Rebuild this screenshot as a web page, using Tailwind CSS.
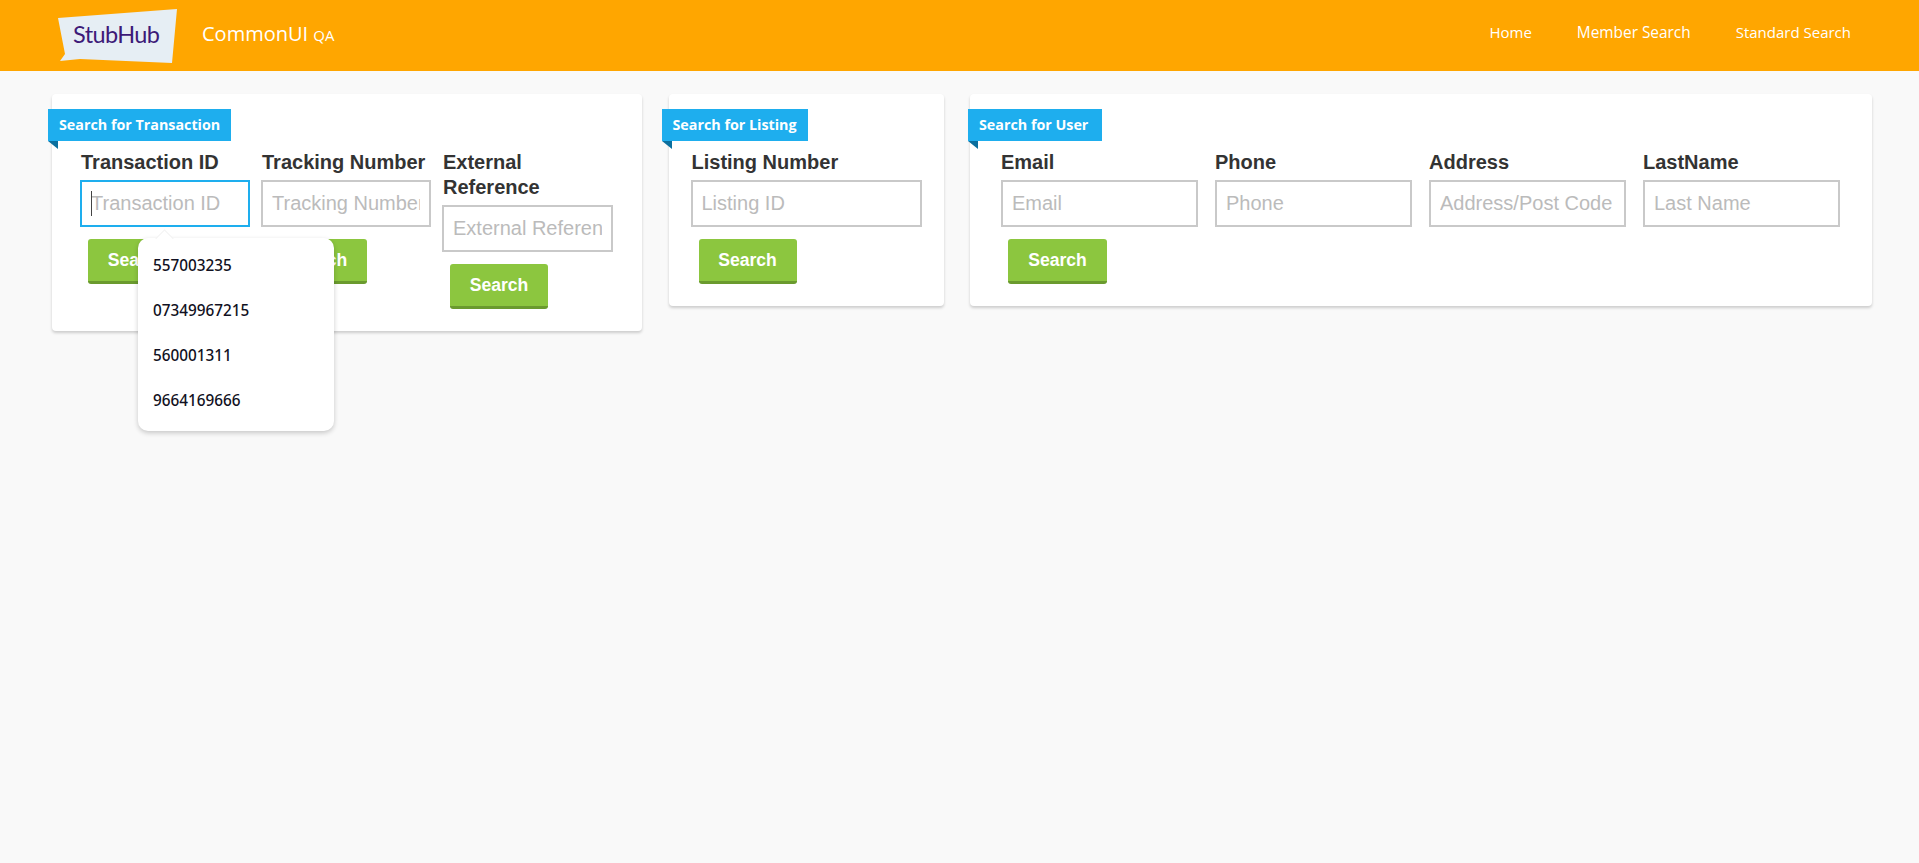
<!DOCTYPE html>
<html lang="en">
  <head>
    <meta charset="UTF-8" />
    <title>CommonUI QA</title>
    <script src="https://cdn.jsdelivr.net/npm/@tailwindcss/browser@4"></script>
  </head>
  <body class="bg-[#f9f9f9] min-h-[863px] font-['Liberation_Sans',sans-serif] text-[#333]">
    <!-- top bar -->
    <header class="h-[71px] bg-[#ffa600] flex items-start justify-between pl-[58px] pr-[68px] font-['Open_Sans',sans-serif] text-white">
      <div class="flex items-center h-full">
        <div class="relative w-[120px] h-[55px] mt-[2px]">
          <svg class="absolute inset-0" width="120" height="55" viewBox="0 0 120 55">
            <path d="M0 9 L119 0 L114 54 L22 50 L2 52 L7 45 Z" fill="#e6eef4" />
            <text x="15" y="34" font-family="Lato, sans-serif" font-size="23.5" fill="#3d1a78" textLength="87">StubHub</text>
          </svg>
        </div>
        <div class="ml-[24px] mb-[4px] text-[20px] leading-none">CommonUI <span class="text-[15px]">QA</span></div>
      </div>
      <nav class="flex gap-[45px] text-[15px] pt-[21px]">
        <a>Home</a>
        <a class="text-[15.4px]">Member Search</a>
        <a>Standard Search</a>
      </nav>
    </header>

    <main class="flex items-start pt-[23px] pl-[52px] pr-[47px] gap-[27px]">
      <!-- transaction card -->
      <section class="relative w-[589.5px] shrink-0 h-[237px] bg-white rounded-[4px] shadow-[0_2px_3px_rgba(0,0,0,0.18)] pt-[56px] pl-[28px]">
        <div class="absolute left-[-4px] top-[15px] h-[32px] w-[183px] bg-[#1eaeee] text-white text-[14.3px] font-bold font-['Open_Sans',sans-serif] leading-[32px] pl-[11px]">
          Search for Transaction
          <span class="absolute left-0 top-[32px] w-0 h-0 border-t-[8px] border-l-[10px] border-t-[#0b6f9e] border-l-transparent"></span>
        </div>
        <div class="grid grid-cols-[170px_170px_171px] gap-x-[11px]">
          <div>
            <label class="block h-[30px] text-[20px] leading-[25px] font-bold pl-[1px]">Transaction ID</label>
            <div class="h-[47px] w-[170px] border-2 border-[#1eaeee] text-[20px] leading-[43px] text-[#bbb] pl-[9px] relative">
              <span class="absolute left-[9px] top-[9px] w-px h-[25px] bg-[#444]"></span>Transaction ID
            </div>
            <button class="mt-[12px] ml-[8px] w-[98px] h-[45px] rounded-[3px] bg-[#8cc63f] border-b-[3px] border-[#6a9a2e] text-white font-bold text-[17.6px]">Search</button>
          </div>
          <div>
            <label class="block h-[30px] text-[20px] leading-[25px] font-bold pl-[1px]">Tracking Number</label>
            <input class="h-[47px] w-[170px] border-2 border-[#c9c9c9] text-[20px] px-[9px] placeholder:text-[#bbb] outline-none" placeholder="Tracking Number" />
            <button class="mt-[12px] ml-[8px] w-[98px] h-[45px] rounded-[3px] bg-[#8cc63f] border-b-[3px] border-[#6a9a2e] text-white font-bold text-[17.6px]">Search</button>
          </div>
          <div>
            <label class="block h-[55px] text-[20px] leading-[25px] font-bold pl-[1px]">External Reference</label>
            <input class="h-[47px] w-[171px] border-2 border-[#c9c9c9] text-[20px] px-[9px] placeholder:text-[#bbb] outline-none" placeholder="External Reference" />
            <button class="mt-[12px] ml-[8px] w-[98px] h-[45px] rounded-[3px] bg-[#8cc63f] border-b-[3px] border-[#6a9a2e] text-white font-bold text-[17.6px]">Search</button>
          </div>
        </div>
        <!-- suggestions popup -->
        <div class="absolute left-[86px] top-[144px] w-[196px] h-[193px] bg-white rounded-[10px] shadow-[0_2px_5px_rgba(0,0,0,0.2)] pt-[5px] pl-[15px] font-['Noto_Sans',sans-serif] font-medium text-[15.3px] text-[#111122]">
          <span class="absolute left-[20px] top-[-6px] w-[13px] h-[13px] rotate-45 bg-white border-t border-l border-black/5"></span>
          <div class="relative h-[45px] leading-[45px]">557003235</div>
          <div class="relative h-[45px] leading-[45px]">07349967215</div>
          <div class="relative h-[45px] leading-[45px]">560001311</div>
          <div class="relative h-[45px] leading-[45px]">9664169666</div>
        </div>
      </section>

      <!-- listing card -->
      <section class="relative w-[275px] shrink-0 h-[212px] bg-white rounded-[4px] shadow-[0_2px_3px_rgba(0,0,0,0.18)] pt-[56px] pl-[22px]">
        <div class="absolute left-[-7px] top-[15px] h-[32px] w-[146px] bg-[#1eaeee] text-white text-[14.3px] font-bold font-['Open_Sans',sans-serif] leading-[32px] pl-[11px]">
          Search for Listing
          <span class="absolute left-0 top-[32px] w-0 h-0 border-t-[8px] border-l-[10px] border-t-[#0b6f9e] border-l-transparent"></span>
        </div>
        <label class="block h-[30px] text-[20px] leading-[25px] font-bold pl-[1px]">Listing Number</label>
        <input class="h-[47px] w-[231px] border-2 border-[#c9c9c9] text-[20px] px-[9px] placeholder:text-[#bbb] outline-none" placeholder="Listing ID" />
        <button class="block mt-[12px] ml-[8px] w-[98px] h-[45px] rounded-[3px] bg-[#8cc63f] border-b-[3px] border-[#6a9a2e] text-white font-bold text-[17.6px]">Search</button>
      </section>

      <!-- user card -->
      <section class="relative w-[901.5px] shrink-0 -ml-[0.5px] h-[212px] bg-white rounded-[4px] shadow-[0_2px_3px_rgba(0,0,0,0.18)] pt-[56px] pl-[31px]">
        <div class="absolute left-[-2px] top-[15px] h-[32px] w-[134px] bg-[#1eaeee] text-white text-[14.3px] font-bold font-['Open_Sans',sans-serif] leading-[32px] pl-[11px]">
          Search for User
          <span class="absolute left-0 top-[32px] w-0 h-0 border-t-[8px] border-l-[10px] border-t-[#0b6f9e] border-l-transparent"></span>
        </div>
        <div class="grid grid-cols-[197px_197px_197px_197px] gap-x-[17px]">
          <div>
            <label class="block h-[30px] text-[20px] leading-[25px] font-bold">Email</label>
            <input class="h-[47px] w-[197px] border-2 border-[#c9c9c9] text-[20px] px-[9px] placeholder:text-[#bbb] outline-none" placeholder="Email" />
          </div>
          <div>
            <label class="block h-[30px] text-[20px] leading-[25px] font-bold">Phone</label>
            <input class="h-[47px] w-[197px] border-2 border-[#c9c9c9] text-[20px] px-[9px] placeholder:text-[#bbb] outline-none" placeholder="Phone" />
          </div>
          <div>
            <label class="block h-[30px] text-[20px] leading-[25px] font-bold">Address</label>
            <input class="h-[47px] w-[197px] border-2 border-[#c9c9c9] text-[20px] px-[9px] placeholder:text-[#bbb] outline-none" placeholder="Address/Post Code" />
          </div>
          <div>
            <label class="block h-[30px] text-[20px] leading-[25px] font-bold">LastName</label>
            <input class="h-[47px] w-[197px] border-2 border-[#c9c9c9] text-[20px] px-[9px] placeholder:text-[#bbb] outline-none" placeholder="Last Name" />
          </div>
        </div>
        <button class="block mt-[12px] ml-[7px] w-[99px] h-[45px] rounded-[3px] bg-[#8cc63f] border-b-[3px] border-[#6a9a2e] text-white font-bold text-[17.6px]">Search</button>
      </section>
    </main>
  </body>
</html>
